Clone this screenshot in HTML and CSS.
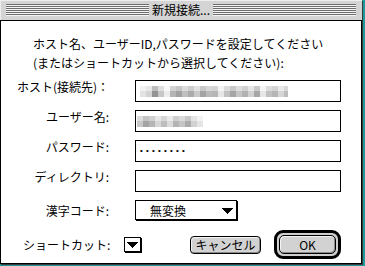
FILE: index.html
```html
<!DOCTYPE html>
<html lang="ja">
<head>
<meta charset="utf-8">
<title>新規接続...</title>
<link rel="stylesheet" href="styles.css">
</head>
<body>
<div class="window">
  <div class="titlebar">
    <div class="stripes"></div>
    <div class="title">新規接続...</div>
    <div class="stripes"></div>
  </div>
  <div class="content">
    <p class="intro">ホスト名、ユーザーID,パスワードを設定してください<br>(またはショートカットから選択してください):</p>
    <div class="form">
      <div class="lbl">ホスト(接続先)：</div>
      <div class="field"><div class="mosaic mosaic-host"></div></div>
      <div class="lbl">ユーザー名:</div>
      <div class="field field-user"><div class="mosaic mosaic-user"></div></div>
      <div class="lbl">パスワード:</div>
      <div class="field field-pw"><span class="dots">••••••••</span></div>
      <div class="lbl">ディレクトリ:</div>
      <div class="field"></div>
      <div class="lbl lbl-popup">漢字コード:</div>
      <div class="popup-cell">
        <div class="popup">
          <span class="popup-text">無変換</span>
          <svg class="arrow" width="11" height="6" viewBox="0 0 11 6"><polygon points="0,0 11,0 5.5,6" fill="#000" shape-rendering="crispEdges"/></svg>
        </div>
      </div>
    </div>
    <div class="actions">
      <div class="sc-label">ショートカット:</div>
      <div class="sc-popup">
        <svg width="11" height="6" viewBox="0 0 11 6"><polygon points="0,0 11,0 5.5,6" fill="#000" shape-rendering="crispEdges"/></svg>
      </div>
      <div class="btn btn-cancel">キャンセル</div>
      <div class="ok-ring"><div class="btn btn-ok">OK</div></div>
    </div>
  </div>
</div>
</body>
</html>
```

FILE: styles.css
```css
html, body {
  margin: 0;
  padding: 0;
}
body {
  width: 365px;
  height: 266px;
  overflow: hidden;
  background: #1d9a9a;
  font-family: "Noto Sans CJK JP", "Noto Sans", sans-serif;
  font-size: 12px;
  color: #000;
}
.window {
  width: 362px;
  height: 264px;
  display: flex;
  flex-direction: column;
  box-shadow: 1px 1px 0 #3a3a3a;
}
.titlebar {
  height: 21px;
  box-sizing: border-box;
  background: #d4d4d4;
  border-bottom: 1px solid #000;
  display: flex;
  align-items: center;
  padding: 0 6px 0 6px;
  box-shadow: inset 1px 1px 0 #eee;
}
.stripes {
  flex: 1;
  height: 12px;
  background: repeating-linear-gradient(to bottom, #6e6e6e 0 1px, #f4f4f4 1px 2px);
}
.title {
  padding: 0 3px;
  line-height: 20px;
  height: 20px;
}
.content {
  flex: 1;
  background: #fff;
  border-left: 1px solid #000;
  border-right: 1px solid #000;
  border-bottom: 1px solid #000;
  padding-top: 13px;
}
.intro {
  margin: 0;
  padding-left: 32px;
  line-height: 19px;
  white-space: nowrap;
}
.form {
  margin-top: 8px;
  display: grid;
  grid-template-columns: 108px 206px;
  column-gap: 26px;
  row-gap: 8px;
  grid-auto-rows: 22px;
}
.lbl {
  align-self: start;
  text-align: right;
  line-height: 14px;
  white-space: nowrap;
}
.lbl-popup {
  padding-top: 4px;
}
.field {
  box-sizing: border-box;
  height: 22px;
  border: 1px solid #000;
  display: flex;
  align-items: center;
  padding-left: 4px;
}
.field-user {
  padding-left: 1px;
}
.mosaic {
  height: 11px;
}
.mosaic-host {
  width: 148px;
  background:
    linear-gradient(to bottom, rgba(255,255,255,0.35) 0 5px, rgba(0,0,0,0.04) 5px 11px),
    linear-gradient(to right,
      #ececec 0 6px, #dcdcdc 6px 12px, #9a9a9a 12px 18px, #cfcfcf 18px 24px,
      #f6f6f6 24px 30px, #bcbcbc 30px 36px, #a8a8a8 36px 42px, #c8c8c8 42px 48px,
      #b2b2b2 48px 54px, #d2d2d2 54px 60px, #ababab 60px 66px, #c2c2c2 66px 72px,
      #bdbdbd 72px 78px, #efefef 78px 84px, #c9c9c9 84px 90px, #acacac 90px 96px,
      #cdcdcd 96px 102px, #b9b9b9 102px 108px, #d9d9d9 108px 114px, #adadad 114px 120px,
      #f0f0f0 120px 126px, #c9c9c9 126px 132px, #bcbcbc 132px 138px, #dedede 138px 144px,
      #c4c4c4 144px 148px);
}
.mosaic-user {
  width: 66px;
  background:
    linear-gradient(to bottom, rgba(255,255,255,0.3) 0 5px, rgba(0,0,0,0.03) 5px 11px),
    linear-gradient(to right,
      #cdcdcd 0 6px, #a9a9a9 6px 12px, #bbbbbb 12px 18px, #dddddd 18px 24px,
      #c4c4c4 24px 30px, #e2e2e2 30px 36px, #bababa 36px 42px, #cbcbcb 42px 48px,
      #b0b0b0 48px 54px, #d8d8d8 54px 60px, #ececec 60px 66px);
}
.dots {
  font-family: "Liberation Sans", sans-serif;
  font-size: 8px;
  letter-spacing: 3.2px;
  line-height: 20px;
}
.popup-cell {
  display: flex;
  align-items: flex-start;
  height: 20px;
}
.popup {
  box-sizing: border-box;
  width: 102px;
  height: 20px;
  border: 1px solid #000;
  box-shadow: 1px 1px 0 #000;
  display: flex;
  align-items: center;
  justify-content: space-between;
  padding: 2px 3px 0 14px;
  line-height: 16px;
  background: #fff;
}
.arrow {
  display: block;
  margin-top: -1px;
}
.actions {
  margin-top: 8px;
  height: 29px;
  display: flex;
  align-items: center;
  padding: 0 20px 0 22px;
}
.sc-label {
  line-height: 14px;
  white-space: nowrap;
  padding-top: 1px;
}
.sc-popup {
  box-sizing: border-box;
  width: 17px;
  height: 15px;
  margin-left: 14px;
  border: 1px solid #000;
  box-shadow: 1px 1px 0 #000;
  display: flex;
  align-items: center;
  justify-content: center;
  background: #fff;
}
.sc-popup svg {
  display: block;
}
.btn {
  box-sizing: border-box;
  border: 1px solid #000;
  background: #d2d2d2;
  box-shadow: inset 1px 1px 0 #f4f4f4, inset -1px -1px 0 #8a8a8a;
  text-align: center;
  white-space: nowrap;
}
.btn-cancel {
  margin-left: auto;
  margin-right: 13px;
  width: 71px;
  height: 18px;
  border-radius: 4px;
  line-height: 16px;
}
.ok-ring {
  box-sizing: border-box;
  width: 67px;
  height: 29px;
  border: 3px solid #000;
  border-radius: 9px;
  padding: 2px;
  background: #cfcfcf;
  display: flex;
}
.btn-ok {
  flex: 1;
  border-radius: 5px;
  line-height: 17px;
}
```
